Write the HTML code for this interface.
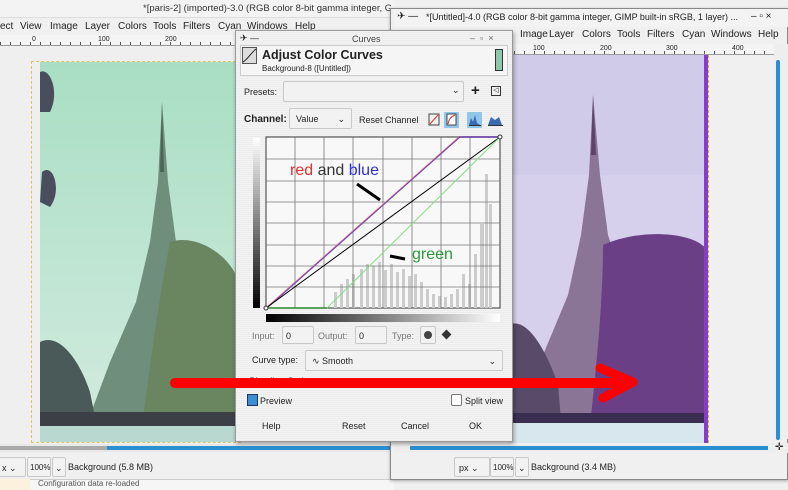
<!DOCTYPE html>
<html><head><meta charset="utf-8"><style>
*{box-sizing:border-box;margin:0;padding:0}
body{width:788px;height:490px;overflow:hidden;background:#f0f0f0;font-family:"Liberation Sans","DejaVu Sans",sans-serif;font-size:9px;color:#222;position:relative}
.abs{position:absolute}
.menu span{position:absolute;top:0;white-space:nowrap}
.ruler{background:#f4f4f4;border-bottom:1px solid #999;background-image:repeating-linear-gradient(90deg,#555 0 1px,transparent 1px 10px);background-size:10px 3px;background-repeat:repeat-x;background-position:0 100%}
.btn{border:1px solid #c8c8c8;background:#f2f2f2;border-radius:2px}
</style></head><body>
<!-- left window -->
<div class="abs" style="left:0;top:0;width:394px;height:18px;background:#f3f3f3;border-bottom:1px solid #ddd"></div>
<div class="abs" style="left:143px;top:3px;width:248px;overflow:hidden;font-size:9.5px;color:#333;white-space:nowrap">*[paris-2] (imported)-3.0 (RGB color 8-bit gamma integer, GIMP built-in sRGB, 1 layer) 275x380 – GIMP</div>
<div class="abs menu" style="left:0;top:21px;font-size:10px;height:14px;width:394px"><span style="left:0">ect</span><span style="left:20px">View</span><span style="left:50px">Image</span><span style="left:85px">Layer</span><span style="left:118px">Colors</span><span style="left:153px">Tools</span><span style="left:183px">Filters</span><span style="left:218px">Cyan</span><span style="left:247px">Windows</span><span style="left:295px">Help</span></div>
<div class="abs ruler" style="left:0;top:35px;width:394px;height:11px"></div>
<div class="abs" style="left:32px;top:36px;font-size:7px">0</div><div class="abs" style="left:98px;top:36px;font-size:7px">100</div><div class="abs" style="left:165px;top:36px;font-size:7px">200</div>
<div class="abs" style="left:0;top:46px;width:394px;height:398px;background:#efefef"></div>
<div class="abs" style="left:31px;top:61px;width:210px;height:382px;border:1px dashed #d8c860"></div>
<svg class="abs" style="left:40px;top:62px" width="200" height="380">
<defs><linearGradient id="sk" x1="0" y1="0" x2="0" y2="1"><stop offset="0" stop-color="#a9dec4"/><stop offset="1" stop-color="#d3ebe0"/></linearGradient></defs>
<rect width="200" height="380" fill="url(#sk)"/>
<polygon points="122,40 118,120 110,180 96,240 70,300 40,380 200,380 170,300 148,240 136,180 128,120" fill="#6f8f7c"/>
<polygon points="122,40 120,110 124,110" fill="#4b6656"/>
<path d="M130,180 C160,170 200,200 200,230 L200,380 L100,380 C110,300 120,230 130,180Z" fill="#6a8660"/>
<path d="M0,280 C20,270 40,300 50,330 L60,380 L0,380Z" fill="#4a5a58"/>
<path d="M0,10 C10,5 20,30 10,50 L0,50Z M2,110 C14,100 22,130 10,145 L0,140Z" fill="#4a4d5c"/>
<rect x="0" y="350" width="200" height="14" fill="#3d3f47"/>
<rect x="0" y="364" width="200" height="16" fill="#b8d8d0"/>
</svg>
<div class="abs" style="left:0;top:444px;width:394px;height:8px;background:#e8e8e8"></div>
<div class="abs" style="left:0;top:446px;width:107px;height:4px;background:#aaa"></div>
<div class="abs" style="left:107px;top:446px;width:290px;height:4px;background:#2a8fd0"></div>
<div class="abs" style="left:0;top:455px;width:394px;height:24px;background:#f0f0f0"></div>
<div class="abs btn" style="left:-4px;top:457px;width:30px;height:20px;font-size:9px;padding:5px 5px">x ⌄</div>
<div class="abs btn" style="left:27px;top:457px;width:24px;height:20px;font-size:8px;padding:5px 2px">100%</div>
<div class="abs btn" style="left:52px;top:457px;width:14px;height:20px;padding:5px 2px">⌄</div>
<div class="abs" style="left:68px;top:462px;font-size:9px">Background (5.8 MB)</div>
<div class="abs" style="left:0;top:479px;width:394px;height:11px;background:#f6f6f6;border-top:1px solid #ccc"></div>
<div class="abs" style="left:0;top:479px;width:30px;height:11px;background:#fbf1dc"></div>
<div class="abs" style="left:38px;top:479px;font-size:8px;color:#555">Configuration data re-loaded</div>

<!-- right window -->
<div class="abs" style="left:390px;top:8px;width:398px;height:472px;background:#f0f0f0;border:1px solid #888;box-shadow:0 1px 3px rgba(0,0,0,.3)"></div>
<div class="abs" style="left:394px;top:9px;width:394px;height:18px;background:#f3f3f3"></div>
<div class="abs" style="left:397px;top:11px;font-size:10px">✈ —</div>
<div class="abs" style="left:426px;top:12px;width:318px;overflow:hidden;font-size:9px;white-space:nowrap">*[Untitled]-4.0 (RGB color 8-bit gamma integer, GIMP built-in sRGB, 1 layer) ...</div>
<div class="abs" style="left:751px;top:11px;font-size:10px">–&nbsp;▫&nbsp;×</div>
<div class="abs menu" style="left:0;top:29px;font-size:10px;height:14px;width:788px"><span style="left:520px">Image</span><span style="left:549px">Layer</span><span style="left:582px">Colors</span><span style="left:617px">Tools</span><span style="left:647px">Filters</span><span style="left:682px">Cyan</span><span style="left:711px">Windows</span><span style="left:758px">Help</span></div>
<div class="abs ruler" style="left:394px;top:44px;width:380px;height:11px"></div>
<div class="abs" style="left:533px;top:45px;font-size:7px">100</div><div class="abs" style="left:600px;top:45px;font-size:7px">200</div><div class="abs" style="left:666px;top:45px;font-size:7px">300</div><div class="abs" style="left:732px;top:45px;font-size:7px">400</div>
<div class="abs" style="left:774px;top:44px;width:14px;height:395px;background:#eee"></div>
<div class="abs" style="left:776px;top:60px;width:4px;height:380px;background:#2a8fd0;border-radius:2px"></div>
<div class="abs" style="left:708px;top:55px;width:1px;height:388px;border-left:1px dashed #c8b840"></div>
<svg class="abs" style="left:508px;top:55px" width="200" height="388">
<rect width="200" height="388" fill="#d6d0ec"/>
<rect x="0" y="0" width="200" height="120" fill="#cfcbe8"/>
<polygon points="85,40 81,120 73,180 60,240 35,300 5,388 190,388 150,300 120,240 100,180 92,120" fill="#8a7596"/>
<polygon points="85,40 83,100 88,100" fill="#5a4468"/>
<path d="M95,190 C140,170 200,180 200,200 L200,388 L80,388 C90,300 95,240 95,190Z" fill="#6b3f86"/>
<path d="M0,270 C20,260 40,300 50,330 L55,388 L0,388Z" fill="#5a4a6a"/>
<rect x="0" y="358" width="200" height="10" fill="#3a2e50"/>
<rect x="0" y="368" width="200" height="20" fill="#d8e6ee"/>
<rect x="196" y="0" width="4" height="388" fill="#8a3cc8"/>
</svg>
<div class="abs" style="left:394px;top:443px;width:394px;height:10px;background:#eee"></div>
<div class="abs" style="left:410px;top:446px;width:358px;height:4px;background:#2a8fd0"></div>
<div class="abs" style="left:775px;top:442px;font-size:10px">✛</div>
<div class="abs btn" style="left:454px;top:457px;width:36px;height:20px;font-size:9px;padding:5px 4px">px ⌄</div>
<div class="abs btn" style="left:490px;top:457px;width:24px;height:20px;font-size:8px;padding:5px 2px">100%</div>
<div class="abs btn" style="left:515px;top:457px;width:14px;height:20px;padding:5px 2px">⌄</div>
<div class="abs" style="left:531px;top:462px;font-size:9px">Background (3.4 MB)</div>

<!-- dialog -->
<div class="abs" style="left:235px;top:30px;width:278px;height:412px;background:#efefef;border:1px solid #999;box-shadow:1px 2px 4px rgba(0,0,0,.35);background-image:repeating-linear-gradient(0deg,#ececec 0 1px,#f3f3f3 1px 2px)"></div>
<div class="abs" style="left:240px;top:33px;font-size:9px">✈ —</div>
<div class="abs" style="left:352px;top:34px;font-size:9px;color:#444">Curves</div>
<div class="abs" style="left:470px;top:33px;font-size:9px;color:#666">–&nbsp;&nbsp;▫&nbsp;&nbsp;×</div>
<div class="abs" style="left:240px;top:45px;width:268px;height:31px;border:1px solid #ccc;background:#f5f5f5"></div>
<svg class="abs" style="left:242px;top:47px" width="15" height="17"><rect x=".5" y=".5" width="14" height="16" fill="#ddd" stroke="#555"/><path d="M1,15 C5,13 9,6 14,2" stroke="#222" fill="none"/></svg>
<div class="abs" style="left:262px;top:48px;font-size:12.5px;font-weight:bold">Adjust Color Curves</div>
<div class="abs" style="left:262px;top:64px;font-size:8px">Background-8 ([Untitled])</div>
<div class="abs" style="left:495px;top:49px;width:8px;height:22px;background:#8fc8a8;border:1px solid #333"></div>
<div class="abs" style="left:244px;top:87px;font-size:9px">Presets:</div>
<div class="abs btn" style="left:283px;top:81px;width:181px;height:21px"></div>
<div class="abs" style="left:452px;top:85px;font-size:9px">⌄</div>
<div class="abs" style="left:471px;top:82px;font-size:15px;font-weight:bold">+</div>
<div class="abs" style="left:491px;top:86px;width:10px;height:10px;border:1px solid #333;font-size:7px;line-height:8px;text-align:center">◁</div>
<div class="abs" style="left:244px;top:114px;font-size:10px;font-weight:bold">Channel:</div>
<div class="abs btn" style="left:289px;top:108px;width:63px;height:21px;font-size:9px;padding:5px 6px">Value<span style="float:right">⌄</span></div>
<div class="abs" style="left:359px;top:115px;font-size:9px">Reset Channel</div>
<svg class="abs" style="left:428px;top:112px" width="80" height="16">
<rect x="1" y="2" width="10" height="11" fill="none" stroke="#444"/><line x1="2" y1="12" x2="10" y2="3" stroke="#d33"/>
<rect x="16" y="0" width="15" height="16" fill="#8fc6ea" rx="1"/><rect x="19" y="2" width="9" height="11" fill="#fff" stroke="#444"/><path d="M20,12 C21,6 24,4 27,3" stroke="#d33" fill="none"/>
<rect x="39" y="0" width="15" height="16" fill="#8fc6ea" rx="1"/><path d="M41,13 L43,6 L45,10 L47,3 L49,11 L52,13Z" fill="#3a6ab0"/><line x1="41" y1="13.5" x2="53" y2="13.5" stroke="#333"/>
<path d="M60,13 L63,5 L67,8 L71,5 L74,13Z" fill="#3a6ab0"/><line x1="60" y1="13.5" x2="75" y2="13.5" stroke="#333"/>
</svg>
<svg class="abs" style="left:250px;top:134px" width="256" height="190">
<defs><linearGradient id="gv" x1="0" y1="0" x2="0" y2="1"><stop offset="0" stop-color="#fff"/><stop offset="1" stop-color="#000"/></linearGradient>
<linearGradient id="gh" x1="0" y1="0" x2="1" y2="0"><stop offset="0" stop-color="#000"/><stop offset="1" stop-color="#fff"/></linearGradient></defs>
<rect x="3" y="4" width="7" height="170" fill="url(#gv)"/>
<rect x="16" y="3" width="234" height="171" fill="#f8f8f8" stroke="#333"/>
<g fill="#ccc">
<rect x="110" y="135" width="3" height="39"/><rect x="116" y="130" width="3" height="44"/><rect x="122" y="132" width="3" height="42"/><rect x="128" y="128" width="3" height="46"/><rect x="134" y="136" width="3" height="38"/><rect x="140" y="130" width="3" height="44"/><rect x="146" y="138" width="3" height="36"/><rect x="152" y="135" width="3" height="39"/><rect x="158" y="142" width="3" height="32"/><rect x="164" y="140" width="3" height="34"/><rect x="170" y="148" width="3" height="26"/><rect x="176" y="155" width="3" height="19"/><rect x="182" y="160" width="3" height="14"/><rect x="188" y="162" width="3" height="12"/><rect x="194" y="163" width="3" height="11"/><rect x="200" y="160" width="3" height="14"/><rect x="206" y="155" width="3" height="19"/><rect x="212" y="140" width="3" height="34"/><rect x="218" y="150" width="3" height="24"/><rect x="224" y="120" width="3" height="54"/><rect x="230" y="90" width="4" height="84"/><rect x="235" y="40" width="3" height="134"/><rect x="239" y="70" width="3" height="104"/><rect x="90" y="150" width="3" height="24"/><rect x="96" y="145" width="3" height="29"/><rect x="102" y="140" width="3" height="34"/><rect x="84" y="158" width="3" height="16"/></g>
<g stroke="#777" stroke-width=".8">
<line x1="45" y1="3" x2="45" y2="174"/><line x1="74" y1="3" x2="74" y2="174"/><line x1="103" y1="3" x2="103" y2="174"/><line x1="133" y1="3" x2="133" y2="174"/><line x1="162" y1="3" x2="162" y2="174"/><line x1="191" y1="3" x2="191" y2="174"/><line x1="220" y1="3" x2="220" y2="174"/>
<line x1="16" y1="25" x2="250" y2="25"/><line x1="16" y1="47" x2="250" y2="47"/><line x1="16" y1="68" x2="250" y2="68"/><line x1="16" y1="89" x2="250" y2="89"/><line x1="16" y1="111" x2="250" y2="111"/><line x1="16" y1="132" x2="250" y2="132"/><line x1="16" y1="153" x2="250" y2="153"/></g>
<line x1="16" y1="174" x2="209" y2="3" stroke="#e07070" stroke-width="1"/>
<line x1="17" y1="174" x2="210" y2="3" stroke="#6a3cc0" stroke-width="1"/>
<line x1="209" y1="3" x2="250" y2="3" stroke="#5a2a9a" stroke-width="1.5"/>
<line x1="16" y1="174" x2="250" y2="3" stroke="#000" stroke-width="1"/>
<line x1="77" y1="174" x2="250" y2="3" stroke="#80e080" stroke-width="1"/>
<line x1="16" y1="174" x2="77" y2="174" stroke="#2a8a2a" stroke-width="1.5"/>
<circle cx="16" cy="174" r="2" fill="#fff" stroke="#333"/><circle cx="250" cy="3" r="2" fill="#fff" stroke="#333"/>
<text x="40" y="41" font-size="16" font-family="Liberation Sans,sans-serif"><tspan fill="#e03030">red</tspan><tspan fill="#333"> and </tspan><tspan fill="#3030d0">blue</tspan></text>
<line x1="107" y1="50" x2="130" y2="66" stroke="#000" stroke-width="3"/>
<line x1="140" y1="122" x2="155" y2="125" stroke="#000" stroke-width="3"/>
<text x="162" y="125" font-size="16" fill="#2a9a3a" font-family="Liberation Sans,sans-serif">green</text>
<rect x="16" y="180" width="234" height="8" fill="url(#gh)"/>
</svg>
<div class="abs" style="left:252px;top:331px;font-size:9px;color:#777">Input:</div>
<div class="abs btn" style="left:282px;top:326px;width:32px;height:18px;font-size:9px;padding:4px 3px">0</div>
<div class="abs" style="left:318px;top:331px;font-size:9px;color:#777">Output:</div>
<div class="abs btn" style="left:355px;top:326px;width:32px;height:18px;font-size:9px;padding:4px 3px">0</div>
<div class="abs" style="left:392px;top:331px;font-size:9px;color:#777">Type:</div>
<div class="abs btn" style="left:420px;top:326px;width:16px;height:18px"></div>
<div class="abs" style="left:424px;top:331px;width:8px;height:8px;border-radius:50%;background:#444"></div>
<div class="abs" style="left:443px;top:331px;width:7px;height:7px;background:#333;transform:rotate(45deg)"></div>
<div class="abs" style="left:252px;top:355px;font-size:9px">Curve type:</div>
<div class="abs btn" style="left:305px;top:350px;width:198px;height:21px;font-size:9px;padding:5px 6px">∿ Smooth<span style="float:right">⌄</span></div>
<div class="abs" style="left:244px;top:376px;font-size:9px">› Blending Options</div>
<div class="abs" style="left:247px;top:394px;width:11px;height:12px;background:#3a8fd0;border:1px solid #236">
</div>
<div class="abs" style="left:260px;top:396px;font-size:9px">Preview</div>
<div class="abs" style="left:451px;top:394px;width:11px;height:12px;background:#fff;border:1px solid #777;border-radius:2px"></div>
<div class="abs" style="left:465px;top:396px;font-size:9px">Split view</div>
<div class="abs" style="left:262px;top:421px;font-size:9px">Help</div>
<div class="abs" style="left:342px;top:421px;font-size:9px">Reset</div>
<div class="abs" style="left:401px;top:421px;font-size:9px">Cancel</div>
<div class="abs" style="left:469px;top:421px;font-size:9px">OK</div>

<!-- red arrow -->
<svg class="abs" style="left:165px;top:360px" width="480" height="45">
<line x1="10" y1="23" x2="455" y2="23" stroke="#f00" stroke-width="10" stroke-linecap="round"/>
<path d="M435,8 L468,22 L438,38" stroke="#f00" stroke-width="9" fill="none" stroke-linecap="round" stroke-linejoin="round"/>
</svg>
</body></html>
